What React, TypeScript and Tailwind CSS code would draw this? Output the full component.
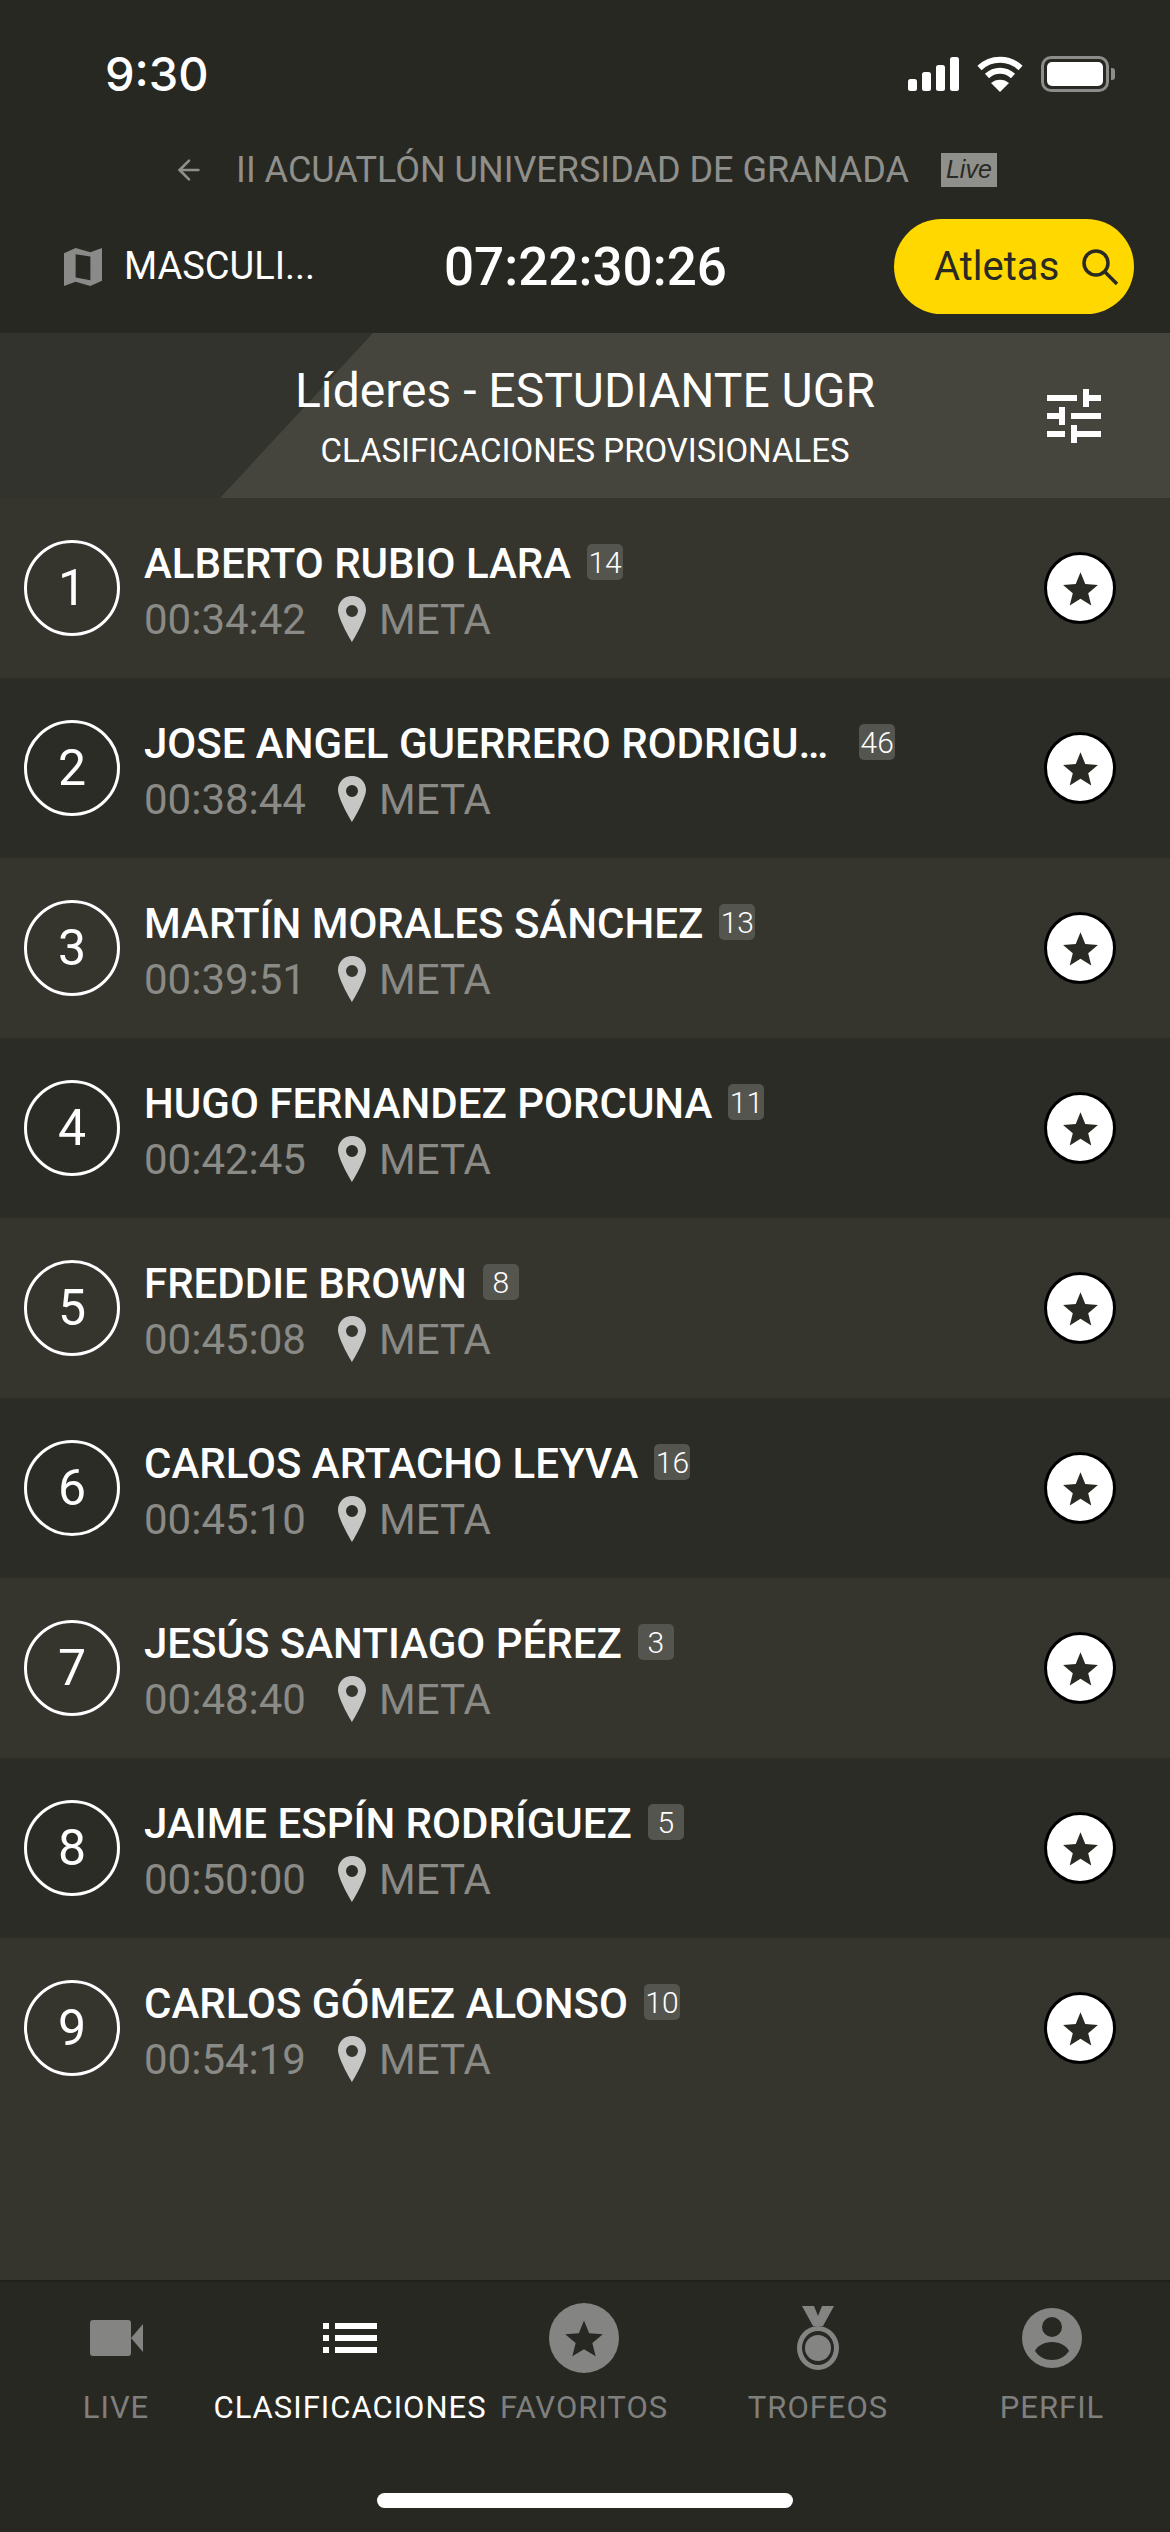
import React from 'react';
import { ArrowLeft } from 'lucide-react';

const FONT = "font-['Roboto',sans-serif]";

const athletes = [
  { pos: 1, name: 'ALBERTO RUBIO LARA', bib: '14', time: '00:34:42' },
  { pos: 2, name: 'JOSE ANGEL GUERRERO RODRIGU…', bib: '46', time: '00:38:44' },
  { pos: 3, name: 'MARTÍN MORALES SÁNCHEZ', bib: '13', time: '00:39:51' },
  { pos: 4, name: 'HUGO FERNANDEZ PORCUNA', bib: '11', time: '00:42:45' },
  { pos: 5, name: 'FREDDIE BROWN', bib: '8', time: '00:45:08' },
  { pos: 6, name: 'CARLOS ARTACHO LEYVA', bib: '16', time: '00:45:10' },
  { pos: 7, name: 'JESÚS SANTIAGO PÉREZ', bib: '3', time: '00:48:40' },
  { pos: 8, name: 'JAIME ESPÍN RODRÍGUEZ', bib: '5', time: '00:50:00' },
  { pos: 9, name: 'CARLOS GÓMEZ ALONSO', bib: '10', time: '00:54:19' },
];

const Star = ({ className }: { className: string }) => (
  <svg viewBox="0 0 24 24" className={className} fill="currentColor">
    <path d="M12 1.500l3.100 7.600 8.200.6-6.300 5.300 2 8-7-4.300-7 4.300 2-8L.7 9.700l8.200-.6z" />
  </svg>
);

const Row = ({ a }: { a: (typeof athletes)[number] }) => (
  <div className={`h-[180px] flex items-center pl-6 pr-[54px] ${a.pos % 2 === 1 ? 'bg-[#35352e]' : 'bg-[#2c2c27]'}`}>
    <div className="w-[96px] h-[96px] shrink-0 rounded-full border-[3px] border-white flex items-center justify-center text-white text-[50px]">
      {a.pos}
    </div>
    <div className="ml-[24px] flex-1 min-w-0 mt-[6px]">
      <div className="flex items-center h-[56px]">
        <span className="text-white text-[42px] font-medium whitespace-nowrap">{a.name}</span>
        <span className={`${a.name.endsWith('…') ? 'ml-[31px]' : 'ml-[16px]'} -mt-[2px] shrink-0 w-[36px] h-[36px] rounded-[5px] bg-[#55554f] text-white text-[30px] font-light flex items-center justify-center`}>
          {a.bib}
        </span>
      </div>
      <div className="flex items-center h-[56px] text-[#8a8a86] text-[42px]">
        <span className="w-[194px]">{a.time}</span>
        <svg viewBox="0 0 28 46" className="w-[28px] h-[46px] text-[#c6c6c4]" fill="currentColor">
          <path fillRule="evenodd" d="M14 0C6 0 0 6.200 0 14c0 9 14 32 14 32s14-23 14-32C28 6.200 22 0 14 0zm0 9a6 6 0 110 12 6 6 0 010-12z" />
        </svg>
        <span className="ml-[13px]">META</span>
      </div>
    </div>
    <div className="w-[72px] h-[72px] shrink-0 rounded-full bg-white border-[3px] border-black flex items-center justify-center text-[#2a2a25]">
      <Star className="w-[37px] h-[37px]" />
    </div>
  </div>
);

const Tab = ({ label, active, icon }: { label: string; active?: boolean; icon: React.ReactNode }) => (
  <div className="w-[234px] flex flex-col items-center">
    <div className="h-[70px] flex items-center justify-center">{icon}</div>
    <span className={`mt-[12px] text-[31px] tracking-[1px] whitespace-nowrap ${active ? 'text-white' : 'text-[#7f7f7d]'}`}>{label}</span>
  </div>
);

export default function App() {
  return (
    <div className={`${FONT} w-[1170px] h-[2532px] bg-[#35352e] flex flex-col overflow-hidden`}>
      <div className="bg-[#282823] h-[333px] shrink-0">
        <div className="h-[138px] flex items-end justify-between pl-[105px] pr-[55px] pb-[46px]">
          <span className="text-white text-[47px] font-medium font-['Inter',sans-serif] leading-none -mb-[5px]">9:30</span>
          <div className="flex items-center gap-[17px]">
            <svg viewBox="0 0 51 34" className="w-[51px] h-[34px]" fill="#fff">
              <rect x="0" y="22" width="9" height="12" rx="2.500" />
              <rect x="14" y="15" width="9" height="19" rx="2.500" />
              <rect x="28" y="8" width="9" height="26" rx="2.500" />
              <rect x="42" y="0" width="9" height="34" rx="2.500" />
            </svg>
            <svg viewBox="0 0 48 36" className="w-[48px] h-[36px]" fill="none" stroke="#fff" strokeWidth="6">
              <path d="M3.500 12C15 1 33 1 44.500 12" />
              <path d="M11 20c7.500-7 18.500-7 26 0" />
              <path d="M24 36l-9-9c5-4.500 13-4.500 18 0z" fill="#fff" stroke="none" />
            </svg>
            <div className="flex items-center">
              <div className="w-[68px] h-[36px] rounded-[10px] border-[3px] border-[#8c8c8a] p-[3px]">
                <div className="w-full h-full rounded-[5px] bg-white" />
              </div>
              <div className="w-[4px] h-[12px] ml-[2px] rounded-r-[3px] bg-[#8c8c8a]" />
            </div>
          </div>
        </div>
        <div className="h-[64px] flex items-center justify-center text-[#8f8f8b]">
          <ArrowLeft className="w-[32px] h-[32px]" strokeWidth={2} />
          <span className="ml-[31px] text-[36px] whitespace-nowrap">II ACUATLÓN UNIVERSIDAD DE GRANADA</span>
          <span className="ml-[32px] w-[56px] h-[34px] bg-[#8f8f8b] text-[#2a2a25] text-[25px] italic flex items-center justify-center font-['Liberation_Sans',sans-serif]">Live</span>
        </div>
        <div className="flex items-center h-[95px] mt-[17px] pl-[64px] pr-[36px]">
          <svg viewBox="0 0 36 36" className="w-[38px] h-[38px] text-[#8a8a88]" fill="currentColor">
            <path fillRule="evenodd" d="M0 5l11-5 14 4 11-4v31l-11 5-14-4-11 4zM11 6v22l14 2.500V8z" />
          </svg>
          <span className="ml-[22px] w-[200px] text-white text-[38px] whitespace-nowrap">MASCULI...</span>
          <span className="ml-[120px] mt-[3px] text-white text-[53px] font-medium whitespace-nowrap">07:22:30:26</span>
          <div className="ml-auto w-[240px] h-[95px] rounded-[48px] bg-[#ffd800] flex items-center pl-[40px] text-[#2a2a25]">
            <span className="text-[40px]">Atletas</span>
            <svg viewBox="0 0 36 36" className="w-[36px] h-[36px] ml-[23px]" fill="none" stroke="currentColor" strokeWidth="3.500">
              <circle cx="14" cy="14" r="12" />
              <path d="M23 23l12 12" />
            </svg>
          </div>
        </div>
      </div>

      <div className="h-[165px] shrink-0 bg-[#33332e] relative flex flex-col items-center justify-center overflow-hidden">
        <div className="absolute inset-0 bg-[#45443d] [clip-path:polygon(220px_100%,373px_0,100%_0,100%_100%)]" />
        <span className="relative mt-[3px] text-white text-[48px] leading-[60px] whitespace-nowrap">Líderes - ESTUDIANTE UGR</span>
        <span className="relative text-white text-[33px] leading-[44px] mt-[8px] whitespace-nowrap">CLASIFICACIONES PROVISIONALES</span>
        <svg viewBox="3 3 18 18" className="absolute right-[69px] top-[56px] w-[54px] h-[54px]" fill="#fff">
          <path d="M3 17v2h6v-2H3zM3 5v2h10V5H3zm10 16v-2h8v-2h-8v-2h-2v6h2zM7 9v2H3v2h4v2h2V9H7zm14 4v-2H11v2h10zm-6-4h2V7h4V5h-4V3h-2v6z" />
        </svg>
      </div>

      <div className="flex-1 bg-[#35352e]">
        {athletes.map((a) => (
          <Row key={a.pos} a={a} />
        ))}
      </div>

      <div className="h-[252px] shrink-0 bg-[#282823] border-t-[2px] border-[#1f1f1b] relative">
        <div className="flex pt-[21px] -ml-px">
          <Tab
            label="LIVE"
            icon={
              <svg viewBox="0 0 53 36" className="w-[53px] h-[36px]" fill="#848483">
                <rect x="0" y="0" width="41" height="36" rx="3" />
                <path d="M41 18l12-14v28z" />
              </svg>
            }
          />
          <Tab
            label="CLASIFICACIONES"
            active
            icon={
              <svg viewBox="0 0 54 30" className="w-[54px] h-[30px]" fill="#fff">
                <rect x="0" y="0" width="6" height="6" />
                <rect x="12" y="0" width="42" height="6" />
                <rect x="0" y="12" width="6" height="6" />
                <rect x="12" y="12" width="42" height="6" />
                <rect x="0" y="24" width="6" height="6" />
                <rect x="12" y="24" width="42" height="6" />
              </svg>
            }
          />
          <Tab
            label="FAVORITOS"
            icon={
              <div className="w-[70px] h-[70px] rounded-full bg-[#848483] flex items-center justify-center text-[#282823]">
                <Star className="w-[40px] h-[40px]" />
              </div>
            }
          />
          <Tab
            label="TROFEOS"
            icon={
              <svg viewBox="0 0 42 64" className="w-[42px] h-[64px]" fill="#848483">
                <path d="M5 0h12l4 10 4-10h12l-11 20h-10z" />
                <path fillRule="evenodd" d="M21 20a21 22 0 100 44 21 22 0 000-44zm0 5a16 17 0 110 34 16 17 0 010-34z" />
                <circle cx="21" cy="42" r="13" />
              </svg>
            }
          />
          <Tab
            label="PERFIL"
            icon={
              <svg viewBox="0 0 60 60" className="w-[60px] h-[60px]" fill="#848483">
                <path fillRule="evenodd" d="M30 0a30 30 0 100 60 30 30 0 000-60zm0 9a10 10 0 110 20 10 10 0 010-20zm0 25c8 0 15 4 17 9-4 6-10 9-17 9s-13-3-17-9c2-5 9-9 17-9z" />
              </svg>
            }
          />
        </div>
        <div className="absolute left-[377px] top-[211px] w-[416px] h-[15px] rounded-full bg-white" />
      </div>
    </div>
  );
}
